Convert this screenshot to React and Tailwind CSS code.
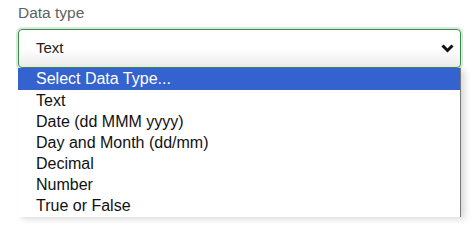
export default function App() {
  const items = [
    "Text",
    "Date (dd MMM yyyy)",
    "Day and Month (dd/mm)",
    "Decimal",
    "Number",
    "True or False",
  ];
  return (
    <div className="w-[475px] h-[228px] bg-white pl-[18px] pt-[4px] font-['Liberation_Sans',Arial,sans-serif] overflow-hidden">
      <div className="text-[15.5px] leading-[18px] text-[#5f5f5f]">Data type</div>
      <div className="w-[443px] mt-[7px]">
        <div className="h-[39px] flex items-center justify-between rounded-[4px] border border-[#3f8a4f] shadow-[0_0_0_2px_#d6ead9] bg-gradient-to-b from-white from-50% to-[#ececec] pl-[17px] pr-[6px]">
          <span className="text-[15px] text-[#222]">Text</span>
          <svg width="13" height="9" viewBox="0 0 13 9">
            <polyline points="1.5,1.5 6.5,6.5 11.5,1.5" fill="none" stroke="#111" strokeWidth="3" />
          </svg>
        </div>
        <div className="w-[443px] h-[149px] bg-white border-r border-[#7a7a7a] shadow-[4px_2px_6px_rgba(0,0,0,0.15)] text-[16px]">
          <div className="h-[22px] leading-[22px] bg-[#3462cf] text-white pl-[18px]">Select Data Type...</div>
          {items.map((t) => (
            <div key={t} className="h-[21px] leading-[21px] text-[#111] pl-[18px]">{t}</div>
          ))}
        </div>
      </div>
    </div>
  );
}
